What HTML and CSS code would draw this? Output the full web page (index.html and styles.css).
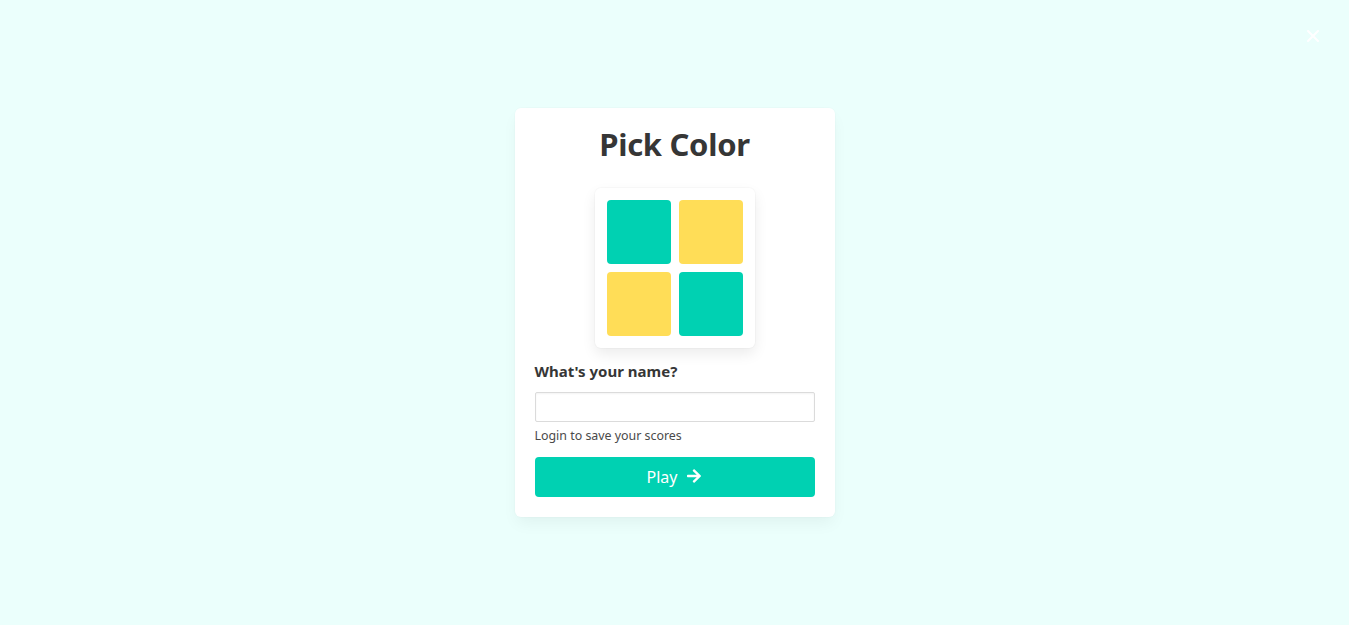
FILE: index.html
```html
<!DOCTYPE html>
<html lang="en">
<head>
<meta charset="utf-8">
<title>Pick Color</title>
<link rel="stylesheet" href="styles.css">
</head>
<body>
<main class="page">
  <button class="close" aria-label="close">
    <svg width="12" height="12" viewBox="0 0 12 12"><path d="M1 1L11 11M11 1L1 11" stroke="#fff" stroke-width="2" stroke-linecap="round"/></svg>
  </button>
  <section class="card">
    <h1 class="title">Pick Color</h1>
    <div class="logo">
      <div class="sq teal"></div>
      <div class="sq yellow"></div>
      <div class="sq yellow"></div>
      <div class="sq teal"></div>
    </div>
    <label class="label" for="name">What's your name?</label>
    <input class="input" id="name" type="text">
    <p class="help">Login to save your scores</p>
    <button class="play">Play
      <svg class="arrow" width="16" height="16" viewBox="0 0 448 512"><path fill="#fff" d="M190.5 66.9l22.2-22.2c9.4-9.4 24.6-9.4 33.9 0L441 239c9.4 9.4 9.4 24.6 0 33.9L246.6 467.3c-9.4 9.4-24.6 9.4-33.9 0l-22.2-22.2c-9.5-9.5-9.3-25 .4-34.3L311.4 296H24c-13.3 0-24-10.7-24-24v-32c0-13.3 10.7-24 24-24h287.4L190.9 101.2c-9.8-9.3-10-24.8-.4-34.3z"/></svg>
    </button>
  </section>
</main>
</body>
</html>
```
FILE: styles.css
```css
* { box-sizing: border-box; }
html, body { margin: 0; height: 100%; }
body {
  background: #ebfffc;
  font-family: "Noto Sans", "Open Sans", sans-serif;
  color: #4a4a4a;
}
.page {
  height: 100%;
  display: flex;
  align-items: center;
  justify-content: center;
  position: relative;
}
.close {
  position: absolute;
  top: 30px;
  right: 30px;
  width: 12px;
  height: 12px;
  padding: 0;
  border: 0;
  background: none;
  display: flex;
}
.card {
  width: 320px;
  background: #fff;
  border-radius: 6px;
  box-shadow: 0 0.5em 1em -0.125em rgba(10,10,10,0.05), 0 0 0 1px rgba(10,10,10,0.01);
  padding: 15px 20px 20px;
  display: flex;
  flex-direction: column;
}
.title {
  margin: 0;
  text-align: center;
  font-size: 31px;
  font-weight: 700;
  color: #363636;
  line-height: 42px;
  letter-spacing: -0.3px;
}
.logo {
  align-self: center;
  margin-top: 23px;
  width: 160px;
  padding: 12px;
  display: grid;
  grid-template-columns: 64px 64px;
  gap: 8px;
  background: #fff;
  border-radius: 6px;
  box-shadow: 0 6px 14px rgba(10,10,10,0.08), 0 0 0 1px rgba(10,10,10,0.02);
}
.sq { width: 64px; height: 64px; border-radius: 4px; }
.teal { background: #00d1b2; }
.yellow { background: #ffdd57; }
.label {
  margin-top: 12px;
  font-size: 15px;
  font-weight: 700;
  color: #363636;
  line-height: 22px;
}
.input {
  margin-top: 10px;
  height: 30px;
  width: 100%;
  border: 1px solid #dbdbdb;
  border-radius: 2px;
  box-shadow: inset 0 1px 2px rgba(10,10,10,0.05);
  font: inherit;
}
.help {
  margin: 5px 0 0;
  font-size: 12.4px;
  line-height: 18px;
}
.play {
  margin-top: 12px;
  height: 40px;
  border: 0;
  border-radius: 4px;
  background: #00d1b2;
  color: #fff;
  font-family: inherit;
  font-size: 16px;
  display: flex;
  align-items: center;
  justify-content: center;
  gap: 9px;
}
.arrow { margin-top: -2px; }
```
